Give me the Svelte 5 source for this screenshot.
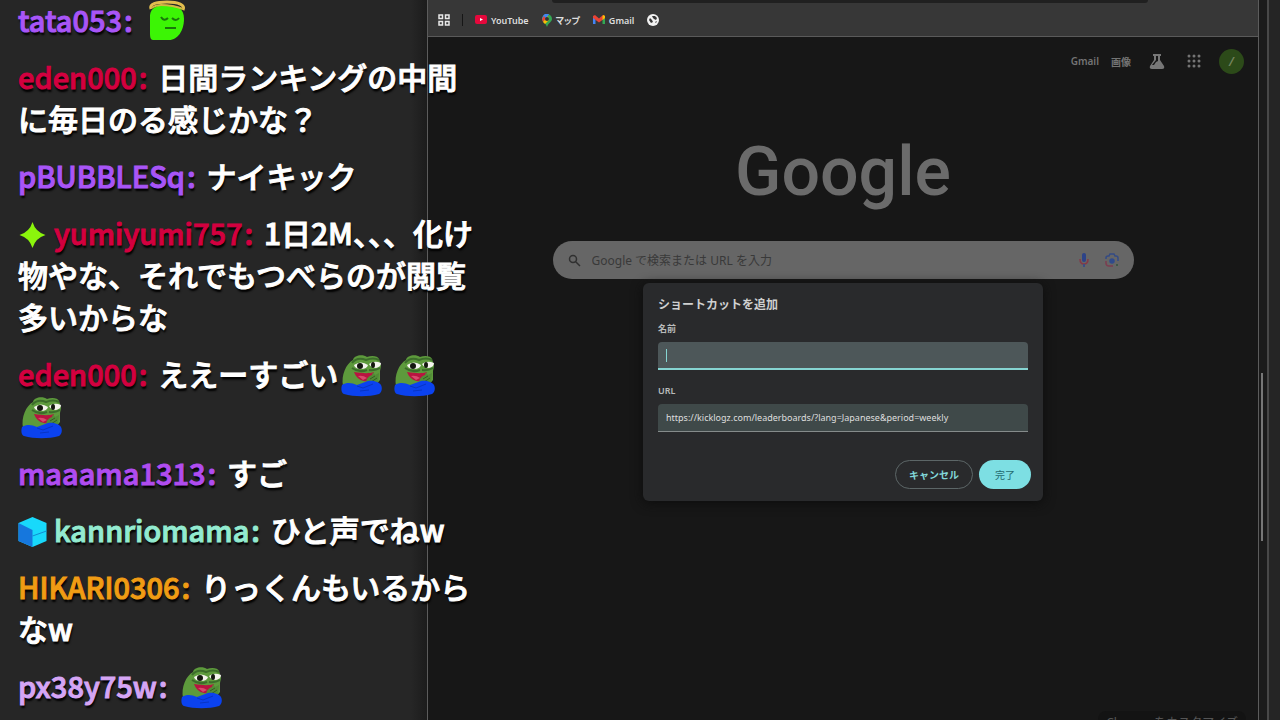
<script lang="ts">
  interface Message {
    user: string;
    color: string;
    badge?: string;
    text?: string;
    emotes?: string[];
  }

  const messages: Message[] = [
    { user: "tata053", color: "#a855f7", emotes: ["angel"] },
    { user: "eden000", color: "#d3003f", text: "日間ランキングの中間に毎日のる感じかな？" },
    { user: "pBUBBLESq", color: "#a855f7", text: "ナイキック" },
    { user: "yumiyumi757", color: "#d3003f", badge: "spark", text: "1日2M、、、化け物やな、それでもつべらのが閲覧多いからな" },
    { user: "eden000", color: "#d3003f", text: "ええーすごい", emotes: ["frog", "frog", "frog"] },
    { user: "maaama1313", color: "#b04cf0", text: "すご" },
    { user: "kannriomama", color: "#93ebd0", badge: "cube", text: "ひと声でねw" },
    { user: "HIKARI0306", color: "#f09c14", text: "りっくんもいるからなw" },
    { user: "px38y75w", color: "#d5a5f5", emotes: ["frog"] },
  ];

  let query = $state("");
  let name = $state("");
  let url = $state("https://kicklogz.com/leaderboards/?lang=Japanese&period=weekly");
</script>

{#snippet emote(kind: string)}
  {#if kind === "frog"}
    <svg class="emote" viewBox="0 -2 42 42" role="img" aria-label="frog">
      <path d="M3 32C1 21 6 10 13 6c1-5 10-6 14-3 5-2 11-1 12 2l2 7-1 5 0 9-5 6-15 3z" fill="#5d9a3c" />
      <path d="M12 9c4-5 9-5 14-3 5-2 9-2 13 0" fill="none" stroke="#3c6d2b" stroke-width="2" />
      <path d="M14 11q7-5 14 0-1 4-7 4t-7-4z" fill="#f4f4ee" />
      <path d="M29 10q5-4 12-1 0 4-5 5-5 0-7-4z" fill="#f4f4ee" />
      <ellipse cx="20" cy="12" rx="3" ry="3" fill="#14180f" />
      <ellipse cx="33" cy="11" rx="2" ry="3" fill="#14180f" />
      <path d="M12 14q7 5 15 2M29 16q6 1 11-2" fill="none" stroke="#3c6d2b" stroke-width="2" />
      <path d="M14 18c8 1 14 2 20 0-1 7-5 10-10 9-5-1-8-4-10-9z" fill="#b81440" />
      <path d="M18 22q5-1 9 2l-4 2z" fill="#d84a6c" />
      <path d="M26 30c0-6 3-8 6-9l1-3 2 3 4-2-1 9-4 6z" fill="#518c35" />
      <path d="M30 25l5-3M31 28l6-4" stroke="#335f24" stroke-width="1" />
      <path d="M2 31c5-3 10-2 15 0l11-4c5-1 11 1 13 4 2 4 0 8-2 9-10 3-25 3-35 0-3-1-3-6-2-9z" fill="#0b42ef" />
      <path d="M17 32l6 2 10-4M20 37l9-1" fill="none" stroke="#0834c4" stroke-width="1" />
    </svg>
  {:else}
    <svg class="emote" viewBox="-2 -2 42 42" role="img" aria-label="angel">
      <path d="M3 15C4 8 9 5 20 5c11 0 17 4 17 14 0 11-6 21-15 21H6c-3 0-3-4-3-8z" fill="#3cf505" />
      <path d="M4 9C2 4 9 2 20 2s19 3 16 8" fill="none" stroke="#e2bd4e" stroke-width="3" />
      <path d="M4 8q5-3 10-3 12 0 22 4" fill="none" stroke="#d0b844" stroke-width="2" />
      <path d="M14 17q3 5 7 1M25 18q4 4 7 0M18 28h11" fill="none" stroke="#19780b" stroke-width="2" />
    </svg>
  {/if}
{/snippet}

{#snippet badge(kind: string)}
  {#if kind === "spark"}
    <svg class="badge" viewBox="0 0 28 30" aria-hidden="true">
      <path d="M14 2q3 10 13 13-10 3-13 13-3-10-13-13Q11 12 14 2z" fill="#8bf50c" />
    </svg>
  {:else}
    <svg class="badge" viewBox="0 0 28 30" aria-hidden="true">
      <path d="M14 0l14 6v18l-14 6L0 24V6z" fill="#18d9fb" />
      <path d="M0 6l14 7v17L0 24z" fill="#1677dd" />
      <path d="M14 19l14-5" stroke="#128bd2" stroke-width="1" />
    </svg>
  {/if}
{/snippet}

<div class="screen">
  <div class="desktop"></div>

  <div class="browser">
    <div class="toolbar"><div class="address"></div></div>
    <nav class="bookmarks">
      <button aria-label="アプリ">
        <svg width="12" height="12" viewBox="0 0 12 12" fill="none" stroke="#e8e8e8" stroke-width="1.500">
          <path d="M1 1h3.500v3.500H1zM7.500 1H11v3.500H7.500zM1 7.500h3.500V11H1zM7.500 7.500H11V11H7.500z" />
        </svg>
      </button>
      <span class="divider"></span>
      <a href="#youtube">
        <svg width="12" height="10" viewBox="0 0 12 10">
          <rect width="12" height="9" rx="2" fill="#e5083c" />
          <path d="M5 3l3 1.500L5 6z" fill="#fff" />
        </svg>
        YouTube
      </a>
      <a href="#maps">
        <svg width="10" height="13" viewBox="0 0 10 13">
          <path d="M5 13C4 9 0 8 0 5a5 5 0 0 1 10 0c0 3-4 4-5 8z" fill="#34a853" />
          <path d="M1 2a5 5 0 0 1 6-2L3 6 0 5z" fill="#4285f4" />
          <path d="M0 5l2-3 2 3-3 3z" fill="#ea4335" />
          <path d="M1 8l5-6 1 4-4 4z" fill="#fbbc04" />
          <circle cx="5" cy="5" r="2" fill="#2f3438" />
        </svg>
        マップ
      </a>
      <a href="#gmail">
        <svg width="12" height="10" viewBox="0 0 12 10">
          <path d="M0 1h2.500v8H0z" fill="#4285f4" />
          <path d="M9.500 1H12v8H9.500z" fill="#34a853" />
          <path d="M0 1l2-1 4 3.500L10 0l2 1v2L6 7.500 0 3z" fill="#ea4335" />
          <path d="M9.500 1l1-1L12 1v2L9.500 5z" fill="#fbbc04" />
        </svg>
        Gmail
      </a>
      <a href="#site" aria-label="サイト">
        <svg width="12" height="12" viewBox="0 0 12 12">
          <circle cx="6" cy="6" r="6" fill="#f1f1f1" />
          <path d="M2 6l1-2 2 2 1 2-2 1zM5 2l3 0 2 2-1 2-2-1-1-1zM8 8l2-1-1 2z" fill="#353535" />
        </svg>
      </a>
    </nav>

    <main class="page">
      <header>
        <a href="#mail">Gmail</a>
        <a href="#images">画像</a>
        <button class="labs" aria-label="Labs">
          <svg width="16" height="16" viewBox="0 0 16 16">
            <path d="M4 1h8v2h-1v4l4 6q1 3-2 3H3q-3 0-2-3l4-6V3H4z" fill="#777" />
            <path d="M7 3h2v5l-2 1-2 3H3l4-5z" fill="#171717" />
          </svg>
        </button>
        <button class="apps" aria-label="Google アプリ">
          <svg width="14" height="14" viewBox="0 0 14 14" fill="#747474">
            {#each [2, 7, 12] as cy}
              {#each [2, 7, 12] as cx}
                <circle {cx} {cy} r="1.500" />
              {/each}
            {/each}
          </svg>
        </button>
        <button class="avatar">/</button>
      </header>

      <h1>Google</h1>

      <form class="search" onsubmit={(e) => e.preventDefault()}>
        <svg width="13" height="13" viewBox="0 0 13 13" fill="none" stroke="#303030" stroke-width="1.500">
          <circle cx="5" cy="5" r="3.500" />
          <path d="M7.500 7.500L12 12" />
        </svg>
        <input type="text" aria-label="検索" placeholder="Google で検索または URL を入力" bind:value={query} />
        <button aria-label="音声検索">
          <svg width="12" height="14" viewBox="0 0 12 14">
            <rect x="4" y="0" width="4" height="9" rx="2" fill="#2d4388" />
            <path d="M2 6q0 5 4 5 4 0 4-5" fill="none" stroke="#853848" stroke-width="1.500" />
            <path d="M6 11v3" stroke="#3c4e83" stroke-width="2" />
          </svg>
        </button>
        <button aria-label="画像で検索">
          <svg width="14" height="14" viewBox="0 0 14 14" fill="none" stroke-width="1.500">
            <path d="M1 6V5q0-2 2-2h1l1-2h4l1 2h1q2 0 2 2v3" stroke="#344b85" />
            <path d="M1 8v2q0 3 3 3h4" stroke="#7b3d50" />
            <circle cx="7" cy="8" r="2" fill="#304b8c" stroke="#304b8c" />
            <circle cx="12" cy="12" r="1" fill="#30543d" />
          </svg>
        </button>
      </form>

      <button class="customize">Chrome をカスタマイズ</button>

      <div class="overlay">
        <form class="dialog" role="dialog" aria-labelledby="dialog-title" onsubmit={(e) => e.preventDefault()}>
          <h2 id="dialog-title">ショートカットを追加</h2>
          <label for="name">名前</label>
          <div class="field active">
            <span class="caret"></span>
            <input id="name" type="text" bind:value={name} />
          </div>
          <label for="url">URL</label>
          <div class="field">
            <input id="url" type="text" bind:value={url} />
          </div>
          <div class="actions">
            <button type="button" class="cancel">キャンセル</button>
            <button type="submit" class="done">完了</button>
          </div>
        </form>
      </div>
    </main>
  </div>

  <div class="edge"><div class="thumb"></div></div>

  <div class="chat">
    {#each messages as message}
      <p>
        {#if message.badge}{@render badge(message.badge)}{/if}<b style="color: {message.color}">{message.user}<span>:</span></b>
        {message.text ?? ""}{#each message.emotes ?? [] as kind, i}{#if i > 0}{" "}{/if}{@render emote(kind)}{/each}
      </p>
    {/each}
  </div>
</div>

<style>
  :global(body) {
    margin: 0;
    background: #262626;
  }

  .screen {
    position: relative;
    display: flex;
    height: 100vh;
    overflow: hidden;
    background: #262626;
    font-family: "Noto Sans", "Noto Sans CJK JP", sans-serif;
    font-size: 10px;
    color: #dedede;
  }

  button,
  input {
    font: inherit;
    color: inherit;
    background: none;
    border: 0;
    padding: 0;
  }

  a {
    color: inherit;
    text-decoration: none;
  }

  svg {
    display: block;
    flex: none;
  }

  .desktop {
    width: 427px;
    flex: none;
    background: linear-gradient(to left, #1c1c1c, #262626 16px);
  }

  .browser {
    flex: 1;
    min-width: 0;
    border: 1px solid #5c5c5c;
    border-width: 0 1px;
  }

  .toolbar {
    height: 4px;
    background: #373737;
    padding: 0 110px 0 124px;
  }

  .address {
    height: 3px;
    background: #202020;
    border-radius: 0 0 8px 8px;
  }

  .bookmarks {
    display: flex;
    align-items: center;
    gap: 13px;
    height: 32px;
    padding-left: 10px;
    background: #373737;
    border-bottom: 1px solid #5a5a5a;
    font-size: 9px;
    font-weight: 600;
    font-feature-settings: "palt";
  }

  .bookmarks a {
    display: flex;
    align-items: center;
    gap: 4px;
  }

  .divider {
    width: 1px;
    height: 12px;
    margin: 0 -1px;
    background: #161616;
  }

  .page {
    position: relative;
    display: flex;
    flex-direction: column;
    align-items: center;
    height: calc(100vh - 10px);
    background: #171717;
  }

  header {
    align-self: stretch;
    display: flex;
    align-items: center;
    justify-content: flex-end;
    height: 48px;
    padding-right: 14px;
    color: #747474;
    font-weight: 600;
  }

  header a {
    margin-right: 12px;
  }

  .labs {
    margin: 0 22px 0 6px;
  }

  .apps {
    margin-right: 18px;
  }

  .avatar {
    width: 25px;
    height: 25px;
    border-radius: 50%;
    background: #2c4a19;
    color: #75845f;
    font-size: 12px;
    font-style: italic;
  }

  h1 {
    margin: 42px 0 0;
    font: 500 68px/90px Roboto, sans-serif;
    color: #6b6b6b;
  }

  .search {
    display: flex;
    align-items: center;
    box-sizing: border-box;
    width: 70%;
    height: 38px;
    margin-top: 24px;
    padding: 0 15px;
    border-radius: 19px;
    background: #666;
  }

  .search input {
    flex: 1;
    margin-left: 11px;
    font-size: 12px;
    outline: none;
  }

  .search input::placeholder {
    color: #393939;
    opacity: 1;
  }

  .search button {
    margin-left: 15px;
  }

  .customize {
    position: absolute;
    right: 12px;
    bottom: 14px;
    padding: 2px 8px;
    font-size: 12px;
    color: #555;
    background: #131313;
    border-radius: 8px;
  }

  .overlay {
    position: absolute;
    inset: 0;
    display: flex;
    align-items: center;
    justify-content: center;
  }

  .dialog {
    box-sizing: border-box;
    width: 400px;
    padding: 14px 15px 12px;
    border-radius: 6px;
    background: #292a2c;
    box-shadow: 0 2px 12px #0d0d0d;
  }

  h2 {
    margin: 0 0 9px;
    font-size: 12px;
    line-height: 16px;
    font-weight: 600;
    color: #cfd0d0;
  }

  label {
    display: block;
    margin-bottom: 6px;
    font-size: 9px;
    line-height: 14px;
    font-weight: 600;
    color: #b8bbbb;
  }

  .field {
    display: flex;
    align-items: center;
    box-sizing: border-box;
    height: 28px;
    margin-bottom: 14px;
    padding: 0 8px;
    border-radius: 4px 4px 0 0;
    border-bottom: 1px solid #858b8b;
    background: #3f4949;
  }

  .field.active {
    border-bottom: 2px solid #86d5d2;
    background: #4d5759;
  }

  .field input {
    flex: 1;
    min-width: 0;
    font-size: 9px;
    outline: none;
  }

  .caret {
    width: 1px;
    height: 13px;
    background: #86d5d2;
  }

  .actions {
    display: flex;
    justify-content: flex-end;
    gap: 6px;
    margin: 28px -3px 0 0;
  }

  .actions button {
    height: 29px;
    border-radius: 15px;
  }

  .cancel {
    padding: 0 13px;
    border: 1px solid #5c6667;
    color: #82d8d9;
    font-weight: 600;
  }

  .done {
    padding: 0 16px;
    background: #7ddfe3;
    color: #246b70;
  }

  .edge {
    width: 21px;
    flex: none;
    box-sizing: border-box;
    padding: 373px 0 0 2px;
    background: linear-gradient(to right, #1b1b1b 8px, #484848 8px, #484848 10px, #252525 10px);
  }

  .thumb {
    width: 2px;
    height: 168px;
    background: #777;
  }

  /* stream chat drawn over the desktop and the window */
  .chat {
    position: absolute;
    left: 18px;
    bottom: 14px;
    width: 460px;
    font: 500 30px/42px "Noto Sans CJK JP", sans-serif;
    color: #fff;
    text-shadow: 1px 3px 2px #000;
    -webkit-text-stroke: 1px;
  }

  .chat p {
    margin: 15px 0 0;
    word-break: break-all;
  }

  .chat b {
    font-size: 29px;
    font-weight: inherit;
    line-height: 40px;
  }

  .chat b span {
    margin: 0 4px 0 2px;
  }

  .emote {
    display: inline-block;
    width: 42px;
    height: 42px;
    margin: 0 2px;
    vertical-align: top;
    overflow: visible;
  }

  .badge {
    display: inline-block;
    width: 29px;
    height: 30px;
    margin-right: 7px;
    vertical-align: -5px;
  }
</style>
